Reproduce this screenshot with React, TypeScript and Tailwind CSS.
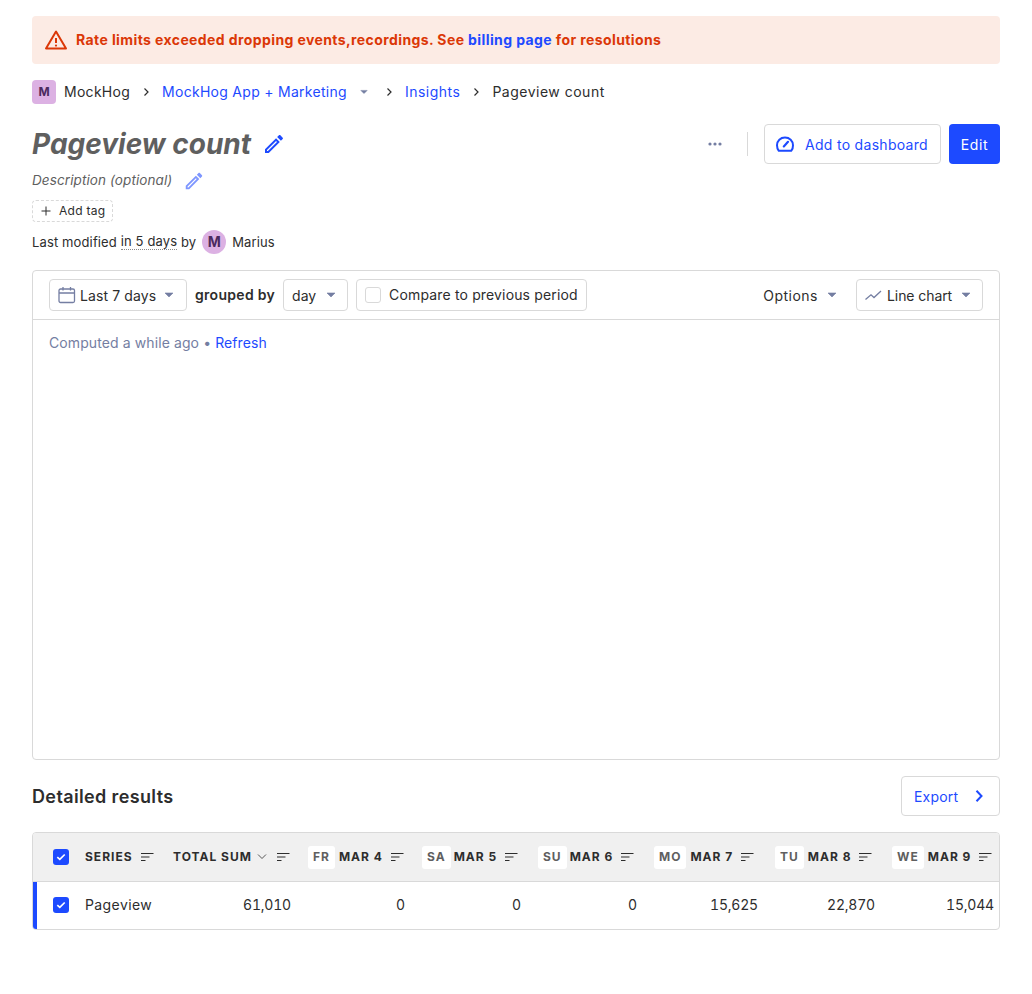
import React from "react";

const Caret = ({ className = "" }: { className?: string }) => (
  <svg width="10" height="6" viewBox="0 0 10 6" className={className}>
    <path d="M1 1h8L5 5z" fill="#747ea2" stroke="#747ea2" strokeWidth="0.6" strokeLinejoin="round" />
  </svg>
);

const Chevron = () => (
  <svg width="16" height="16" viewBox="0 0 16 16" fill="none">
    <path d="M6.500 4.500 10 8l-3.500 3.500" stroke="#2d2d2d" strokeWidth="1.2" />
  </svg>
);

const Pencil = ({ className = "", size = 24 }: { className?: string; size?: number }) => (
  <svg width={size} height={size} viewBox="0 0 24 24" className={className} fill="currentColor">
    <path d="M14.060 9.020l.92.92L5.920 19H5v-.92l9.060-9.060M17.660 3c-.25 0-.51.1-.7.29l-1.830 1.830 3.750 3.750 1.830-1.830c.39-.39.39-1.020 0-1.410l-2.340-2.340c-.2-.2-.45-.29-.71-.29zm-3.600 3.190L3 17.250V21h3.750L17.810 9.940l-3.750-3.750z" />
  </svg>
);

const SortIcon = () => (
  <svg width="14" height="10" viewBox="0 0 14 10" className="shrink-0">
    <path d="M1 1.500h12.500M1 5h8.500M1 8.500h4.500" stroke="#2d2d2d" strokeWidth="1.1" fill="none" />
  </svg>
);

const Check = () => (
  <span className="flex h-4 w-4 items-center justify-center rounded-[3px] bg-[#1d4aff]">
    <svg width="10" height="8" viewBox="0 0 10 8" fill="none">
      <path d="M1.300 4.200 3.800 6.400 8.700 1.500" stroke="#fff" strokeWidth="1.7" />
    </svg>
  </span>
);

const gridCols = "grid grid-cols-[44px_88px_135px_114px_116px_116px_121px_117px_115px]";

const days = [
  ["FR", "MAR 4", "ml-1"],
  ["SA", "MAR 5", "ml-[3px]"],
  ["SU", "MAR 6", "ml-[3px]"],
  ["MO", "MAR 7", "ml-1"],
  ["TU", "MAR 8", "ml-1"],
  ["WE", "MAR 9", "ml-1"],
];
const values = ["0", "0", "0", "15,625", "22,870", "15,044"];

export default function App() {
  return (
    <div className="min-h-[994px] bg-white px-8 pt-4 font-['Inter',sans-serif] text-sm text-[#2d2d2d]">
      <div className="flex h-12 items-center rounded bg-[#fcebe4] pl-3 font-bold tracking-[0.4px] text-[#db3707]">
        <svg width="24" height="24" viewBox="0 0 24 24" fill="none" className="mr-2">
          <path d="M12 3.600 2 20.400h20z" stroke="#db3707" strokeWidth="2" strokeLinejoin="round" />
          <path d="M12 10v5" stroke="#db3707" strokeWidth="2" />
          <circle cx="12" cy="17.600" r="1.100" fill="#db3707" />
        </svg>
        <span>
          Rate limits exceeded dropping events,recordings. See <span className="text-[#1d4aff]">billing page</span> for resolutions
        </span>
      </div>

      <div className="mt-4 flex h-6 items-center">
        <span className="flex h-6 w-6 items-center justify-center rounded bg-[#dcb1e3] text-xs font-bold text-[#4a2a5e]">M</span>
        <span className="ml-2 tracking-[0.28px]">MockHog</span>
        <span className="ml-2"><Chevron /></span>
        <span className="ml-2 tracking-[0.28px] text-[#1d4aff]">MockHog App + Marketing</span>
        <svg width="8" height="6" viewBox="0 0 10 6" className="ml-[13px]">
          <path d="M1 1h8L5 5z" fill="#747ea2" stroke="#747ea2" strokeWidth="0.6" strokeLinejoin="round" />
        </svg>
        <span className="ml-[13px]"><Chevron /></span>
        <span className="ml-2 tracking-[0.5px] text-[#1d4aff]">Insights</span>
        <span className="ml-2"><Chevron /></span>
        <span className="ml-2 tracking-[0.5px]">Pageview count</span>
      </div>

      <div className="mt-5 flex h-10 items-center">
        <h1 className="m-0 text-[28px] leading-10 font-bold italic text-[#5f5f5f]">Pageview count</h1>
        <Pencil className="ml-[11px] text-[#1d4aff]" />
        <div className="ml-auto flex items-center">
          <svg width="16" height="16" viewBox="0 0 16 16" fill="#747ea2">
            <circle cx="3" cy="8" r="1.600" /><circle cx="8" cy="8" r="1.600" /><circle cx="13" cy="8" r="1.600" />
          </svg>
          <span className="ml-6 h-6 w-px bg-[#d9d9d9]" />
          <button className="ml-4 flex h-10 w-[177px] items-center rounded border border-[#d9d9d9] bg-white pl-[10px] text-[#1d4aff]">
            <svg width="20" height="20" viewBox="0 0 20 20" fill="none" stroke="#1d4aff" strokeWidth="2">
              <path d="M3.800 16.800h12.400a8 8 0 0 0 1.800-5.500c0-4.500-3.500-7.800-8-7.800s-8 3.300-8 7.800c0 2.100.6 4 1.800 5.500z" strokeLinejoin="round" />
              <path d="M8.800 12.400 13 7.800" strokeWidth="2.200" strokeLinecap="round" />
            </svg>
            <span className="ml-[10px] pt-[2px] tracking-[0.3px]">Add to dashboard</span>
          </button>
          <button className="ml-2 flex h-10 w-[51px] items-center justify-center rounded bg-[#1d4aff] pt-[2px] tracking-[0.6px] text-white">Edit</button>
        </div>
      </div>

      <div className="mt-[5px] flex h-6 items-center text-[13.5px] tracking-[0.1px] italic text-[#5f5f5f]">
        <span>Description (optional)</span>
        <Pencil size={22} className="ml-[11px] text-[#7e96ff]" />
      </div>

      <div className="mt-[7px] flex h-[22px] w-[81px] items-center rounded border border-dashed border-[#d9d9d9] pl-[6px] text-xs tracking-[0.3px]">
        <svg width="14" height="14" viewBox="0 0 14 14" fill="none" stroke="#2d2d2d" strokeWidth="1">
          <path d="M7 2.500v9M2.500 7h9" />
        </svg>
        <span className="ml-[6px]">Add tag</span>
      </div>

      <div className="mt-2 flex h-6 items-center text-[13px] tracking-[0.13px]">
        <span>Last modified&nbsp;</span>
        <span className="border-b border-dotted border-[#8a8a8a] leading-[15px]">in 5 days</span>
        <span>&nbsp;by</span>
        <span className="ml-[6px] flex h-6 w-6 items-center justify-center rounded-full bg-[#dcb1e3] text-sm font-bold text-[#4a2a5e]">M</span>
        <span className="ml-[6px]">Marius</span>
      </div>

      <div className="mt-4 h-[490px] rounded border border-[#d9d9d9]">
        <div className="flex h-[49px] items-center border-b border-[#d9d9d9] px-4">
          <div className="flex h-8 w-[138px] items-center rounded border border-[#d9d9d9] pl-2">
            <svg width="18" height="18" viewBox="0 0 18 18" fill="none" stroke="#747ea2" strokeWidth="1.300">
              <rect x="1" y="3" width="15.500" height="13.500" rx="1.500" />
              <path d="M1 7h15.500M5 1v3.500M12.500 1v3.500" />
            </svg>
            <span className="ml-1 pt-[2px] tracking-[0.1px]">Last 7 days</span>
            <Caret className="ml-2" />
          </div>
          <span className="ml-2 font-semibold tracking-[0.3px]">grouped by</span>
          <div className="ml-2 flex h-8 w-[65px] items-center rounded border border-[#d9d9d9] pl-2">
            <span className="pt-[2px]">day</span>
            <Caret className="ml-[10px]" />
          </div>
          <div className="ml-2 flex h-8 w-[231px] items-center rounded border border-[#d9d9d9] pl-2">
            <span className="h-4 w-4 rounded-[3px] border border-[#d9d9d9]" />
            <span className="ml-2 tracking-[0.15px]">Compare to previous period</span>
          </div>
          <div className="ml-auto flex items-center">
            <span className="pt-[2px] tracking-[0.5px]">Options</span>
            <Caret className="ml-[9px]" />
            <div className="ml-[19px] flex h-8 w-[127px] items-center rounded border border-[#d9d9d9] pl-2">
              <svg width="17" height="17" viewBox="0 0 17 17" fill="none" stroke="#747ea2" strokeWidth="1.300">
                <path d="M0.500 12.500 6 7.800l3 2.700L16 4" />
              </svg>
              <span className="ml-[5px] pt-[2px] tracking-[-0.08px]">Line chart</span>
              <Caret className="ml-[9px]" />
            </div>
          </div>
        </div>
        <div className="px-4 pt-[13px] leading-[20px] tracking-[0.1px] text-[#747ea2]">
          Computed a while ago • <span className="text-[#1d4aff]">Refresh</span>
        </div>
      </div>

      <div className="mt-4 flex h-10 items-center justify-between">
        <h2 className="m-0 pt-[2px] text-lg font-semibold tracking-[0.37px]">Detailed results</h2>
        <button className="flex h-10 w-[99px] items-center rounded border border-[#d9d9d9] bg-white pl-3 text-[#1d4aff]">
          <span className="pt-[2px] tracking-[0.2px]">Export</span>
          <svg width="16" height="16" viewBox="0 0 16 16" fill="none" stroke="#1d4aff" strokeWidth="2" className="ml-[13px]">
            <path d="M5.500 2.800 10.500 8l-5 5.200" />
          </svg>
        </button>
      </div>

      <div className="mt-4 overflow-hidden rounded border border-[#d9d9d9]">
        <div className={`${gridCols} h-[49px] items-center border-b border-[#d9d9d9] bg-[#f0f0f0] text-xs font-bold tracking-[1px]`}>
          <div className="flex justify-end pr-2"><Check /></div>
          <div className="flex items-center pl-2"><span>SERIES</span><span className="ml-[7px]"><SortIcon /></span></div>
          <div className="flex items-center pl-2"><span>TOTAL SUM</span>
            <svg width="10" height="8" viewBox="0 0 10 8" fill="none" stroke="#2d2d2d" strokeWidth="0.8" className="ml-[5px]"><path d="M1 1.500 5 5.500l4-4" /></svg>
            <span className="ml-[9px]"><SortIcon /></span>
          </div>
          {days.map(([d, m, gap]) => (
            <div key={m} className="flex items-center pl-2">
              <span className="flex h-[23px] items-center rounded-[3px] bg-white px-[5px] text-[#5f5f5f]">{d}</span>
              <span className={gap}>{m}</span>
              <span className="ml-[7px]"><SortIcon /></span>
            </div>
          ))}
        </div>
        <div className={`${gridCols} h-[47px] items-center pb-[2px] tracking-[0.4px]`}>
          <div className="-mb-[2px] flex h-[47px] items-center justify-end border-l-4 border-[#1d4aff] pr-2 pb-[2px]"><Check /></div>
          <div className="pl-2">Pageview</div>
          <div className="pr-[9px] text-right tabular-nums tracking-[-0.2px]">61,010</div>
          {values.map((v, i) => (
            <div key={i} className={`${i === 5 ? "pr-[5px]" : "pr-[9px]"} text-right tabular-nums tracking-[-0.2px]`}>{v}</div>
          ))}
        </div>
      </div>
    </div>
  );
}
